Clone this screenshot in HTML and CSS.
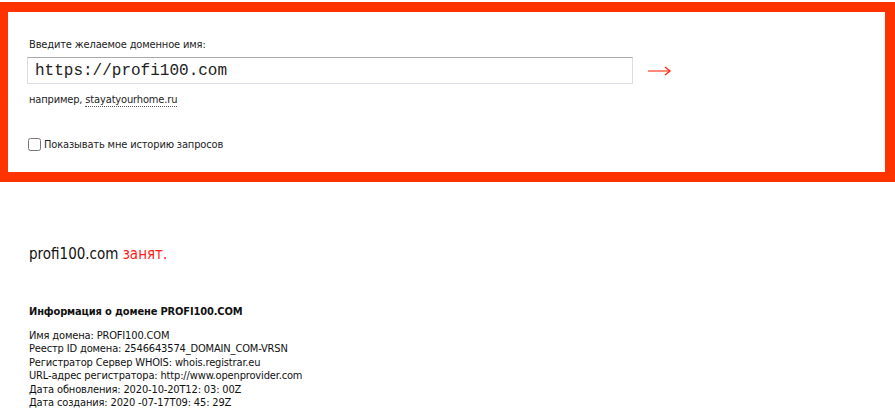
FILE: index.html
```html
<!DOCTYPE html>
<html lang="ru">
<head>
<meta charset="utf-8">
<title>Whois</title>
<link rel="stylesheet" href="styles.css">
</head>
<body>
<form class="search">
  <div class="label">Введите желаемое доменное имя:</div>
  <div class="row">
    <input class="domain" type="text" value="https://profi100.com">
    <button class="go" type="button" aria-label="Проверить">
      <svg width="24" height="10" viewBox="0 0 24 10">
        <line x1="0" y1="5" x2="21" y2="5" stroke="#ff8a78" stroke-width="2"/>
        <path d="M17 1 L22 5 L17 9" fill="none" stroke="#ff2a10" stroke-width="1.4"/>
      </svg>
    </button>
  </div>
  <div class="hint">например, <a class="example" href="#">stayatyourhome.ru</a></div>
  <label class="history"><input type="checkbox" class="chk"> Показывать мне историю запросов</label>
</form>
<section class="result">
  <div class="status">profi100.com <span class="busy">занят.</span></div>
  <div class="info-title">Информация о домене PROFI100.COM</div>
  <div class="info">
    <div>Имя домена: PROFI100.COM</div>
    <div>Реестр ID домена: 2546643574_DOMAIN_COM-VRSN</div>
    <div>Регистратор Сервер WHOIS: whois.registrar.eu</div>
    <div>URL-адрес регистратора: http://www.openprovider.com</div>
    <div>Дата обновления: 2020-10-20T12: 03: 00Z</div>
    <div>Дата создания: 2020 -07-17T09: 45: 29Z</div>
  </div>
</section>
</body>
</html>
```
FILE: styles.css
```css
html, body {
  margin: 0;
  padding: 0;
  background: #fff;
}
body {
  font-family: "DejaVu Sans Condensed", "DejaVu Sans", sans-serif;
  font-size: 11px;
  line-height: 13px;
  letter-spacing: -0.15px;
  color: #222;
  overflow: hidden;
}
.search {
  margin-top: 2px;
  height: 134px;
  border: 10px solid #ff3300;
  border-left-width: 8px;
  padding: 26px 0 0 21px;
  box-sizing: content-box;
}
.label {
  height: 13px;
}
.row {
  display: flex;
  align-items: center;
  margin-top: 6px;
}
.domain {
  margin: 0 0 0 -2px;
  width: 606px;
  height: 27px;
  box-sizing: border-box;
  border: 1px solid #dcdce6;
  border-top-color: #a8a8a8;
  padding: 0 7px;
  font-family: "Liberation Mono", "Courier New", monospace;
  font-size: 16px;
  letter-spacing: 0;
  color: #222;
  outline: none;
}
.go {
  margin-left: 15px;
  padding: 0;
  border: 0;
  background: none;
  display: flex;
  cursor: pointer;
}
.hint {
  margin-top: 9px;
}
.example {
  color: #222;
  text-decoration: none;
  border-bottom: 1px dotted #555;
}
.history {
  display: flex;
  align-items: center;
  margin-top: 32px;
  margin-left: -1px;
}
.chk {
  margin: 0 3px 0 0;
  width: 13px;
  height: 13px;
}
.result {
  padding: 63px 0 0 29px;
}
.status {
  font-size: 15px;
  line-height: 18px;
  letter-spacing: 0;
  color: #111;
}
.busy {
  color: #ff1a1a;
}
.info-title {
  margin-top: 42px;
  font-weight: bold;
  color: #111;
}
.info {
  margin-top: 11px;
  line-height: 13.4px;
  color: #111;
}
```
